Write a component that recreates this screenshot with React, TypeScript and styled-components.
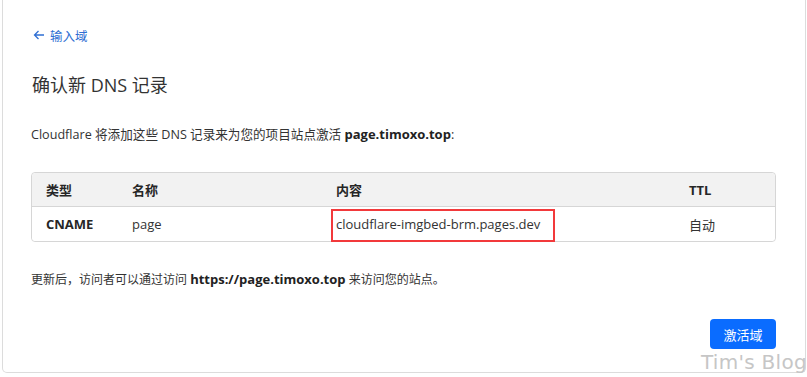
import React from "react";
import styled, { createGlobalStyle } from "styled-components";

const Global = createGlobalStyle`
  html, body { margin: 0; padding: 0; background: #fff; }
  body { font-family: "Open Sans", "Noto Sans CJK SC", sans-serif; color: #313131; }
`;

const Card = styled.div`
  margin-left: 2px;
  width: 804px;
  height: 373px;
  border: 1px solid #dcdcdc;
  border-top: none;
  border-radius: 0 0 5px 5px;
  box-sizing: border-box;
  padding: 24px 28px 0 28px;
  position: relative;
`;

const BackLink = styled.a`
  display: inline-flex;
  align-items: center;
  gap: 5px;
  color: #2f6fd3;
  font-size: 12.5px;
  text-decoration: none;
  height: 20px;
  padding-left: 2px;
`;

const Title = styled.h1`
  margin: 27px 0 0 1px;
  font-size: 18px;
  font-weight: 400;
  color: #333;
  line-height: 24px;
`;

const Para = styled.p`
  margin: 28px 0 0 0;
  font-size: 12.6px;
  line-height: 18px;
  color: #333;
  b { font-weight: 700; color: #222; font-size: 13px; }
`;

const Table = styled.div`
  margin-top: 28px;
  width: 745px;
  border: 1px solid #d6d6d6;
  border-radius: 4px;
  box-sizing: border-box;
`;

const Row = styled.div<{ $head?: boolean }>`
  display: grid;
  grid-template-columns: 86px 204px 353px 1fr;
  height: ${(p) => (p.$head ? 33 : 34)}px;
  align-items: center;
  background: ${(p) => (p.$head ? "#f2f2f2" : "#fff")};
  border-bottom: ${(p) => (p.$head ? "1px solid #d6d6d6" : "none")};
  border-radius: ${(p) => (p.$head ? "4px 4px 0 0" : "0 0 4px 4px")};
  font-size: 13px;
  color: #333;
`;

const Cell = styled.div<{ $bold?: boolean }>`
  padding-left: 14px;
  font-weight: ${(p) => (p.$bold ? 700 : 400)};
  color: ${(p) => (p.$bold ? "#262626" : "#333")};
  position: relative;
`;

const Highlight = styled.span`
  position: absolute;
  left: 9px;
  top: -6px;
  width: 220px;
  height: 29px;
  border: 2px solid #f2393b;
  z-index: 1;
`;

const Footer = styled.p`
  margin: 28px 0 0 0;
  font-size: 12px;
  line-height: 18px;
  color: #333;
  b { font-weight: 700; color: #222; font-size: 13px; }
`;

const Actions = styled.div`
  display: flex;
  justify-content: flex-end;
  width: 745px;
  margin-top: 30px;
`;

const Button = styled.button`
  background: #0a6cff;
  color: #fff;
  border: none;
  border-radius: 4px;
  width: 66px;
  height: 30px;
  font-size: 13px;
  font-family: "Noto Sans CJK SC", sans-serif;
`;

const Watermark = styled.div`
  position: absolute;
  right: -2px;
  bottom: -2px;
  font-family: "DejaVu Sans", sans-serif;
  font-size: 20px;
  color: #c6c6c6;
  letter-spacing: 0.3px;
`;

export default function App() {
  return (
    <>
      <Global />
      <Card>
        <BackLink href="#">
          <svg width="12" height="12" viewBox="0 0 12 12" fill="none" stroke="#2f6fd3" strokeWidth="1.3">
            <path d="M11 6H1.5M5.5 2L1.5 6l4 4" />
          </svg>
          输入域
        </BackLink>
        <Title>确认新 DNS 记录</Title>
        <Para>
          Cloudflare 将添加这些 DNS 记录来为您的项目站点激活 <b>page.timoxo.top</b>:
        </Para>
        <Table>
          <Row $head>
            <Cell $bold>类型</Cell>
            <Cell $bold>名称</Cell>
            <Cell $bold>内容</Cell>
            <Cell $bold>TTL</Cell>
          </Row>
          <Row>
            <Cell $bold>CNAME</Cell>
            <Cell>page</Cell>
            <Cell>
              <Highlight />
              cloudflare-imgbed-brm.pages.dev
            </Cell>
            <Cell>自动</Cell>
          </Row>
        </Table>
        <Footer>
          更新后，访问者可以通过访问 <b>https://page.timoxo.top</b> 来访问您的站点。
        </Footer>
        <Actions>
          <Button>激活域</Button>
        </Actions>
        <Watermark>Tim's Blog</Watermark>
      </Card>
    </>
  );
}
